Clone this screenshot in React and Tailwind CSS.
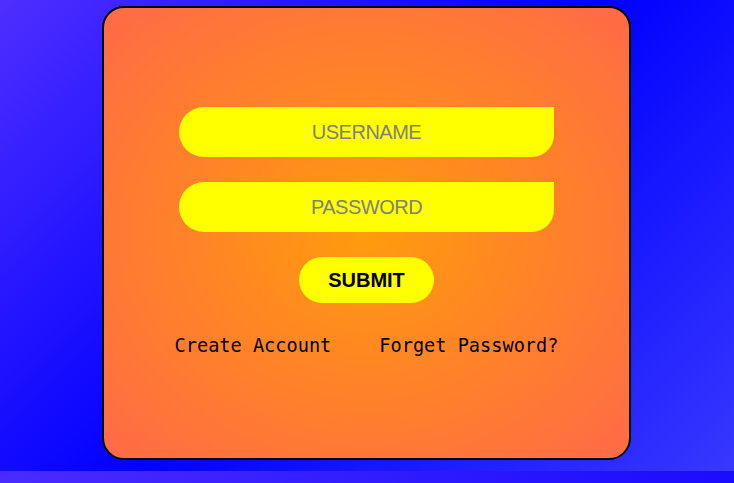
import React from "react";

const Login = () => {
  return (
    <div className="flex h-[454px] w-[529px] flex-col items-center rounded-[22px] border-2 border-black bg-[radial-gradient(ellipse_at_center,#ff9c0c_0%,#ff8426_45%,#ff6a48_100%)] pt-[99px]">
      {/* inputs */}
      <input
        type="text"
        placeholder="USERNAME"
        className="h-[50px] w-[375px] rounded-l-[25px] rounded-br-[22px] bg-[#ffff00] text-center font-['Liberation_Sans',Arial,sans-serif] text-[20px] tracking-[-0.5px] text-[#808080] outline-none placeholder:text-[#808080]"
      />
      <input
        type="password"
        placeholder="PASSWORD"
        className="mt-[25px] h-[50px] w-[375px] rounded-l-[25px] rounded-br-[22px] bg-[#ffff00] text-center font-['Liberation_Sans',Arial,sans-serif] text-[20px] tracking-[-0.5px] text-[#808080] outline-none placeholder:text-[#808080]"
      />

      <button className="mt-[25px] h-[46px] w-[135px] rounded-full bg-[#ffff00] font-['Liberation_Sans',Arial,sans-serif] text-[20px] font-bold text-black">
        SUBMIT
      </button>

      {/* links */}
      <div className="mt-[29px] flex gap-[48px] font-['DejaVu_Sans_Mono',monospace] text-[18.6px] text-black">
        <a href="#">Create Account</a>
        <a href="#">Forget Password?</a>
      </div>
    </div>
  );
};

const App = () => {
  return (
    <div className="h-[483px] w-full overflow-hidden">
      <div className="flex h-[471px] bg-[linear-gradient(135deg,#4e2eff_0%,#0000ff_50%,#3838ff_100%)] pl-[102px] pt-[6px]">
        <Login />
      </div>
      <div className="h-[12px] bg-[linear-gradient(to_right,#4a2bff,#1a0cff)]" />
    </div>
  );
};

export default App;
